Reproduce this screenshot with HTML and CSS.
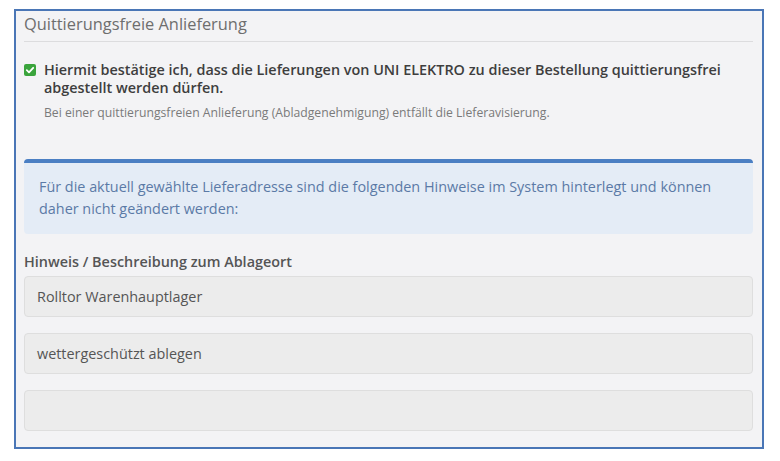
FILE: index.html
```html
<!DOCTYPE html>
<html lang="de">
<head>
    <meta charset="UTF-8">
    <meta name="viewport" content="width=device-width, initial-scale=1.0">
    <title>Quittierungsfreie Anlieferung</title>
    <link rel="stylesheet" href="styles.css">
</head>
<body>

    <div class="panel">
        <h3 class="panel-title">Quittierungsfreie Anlieferung</h3>

        <!-- Bestaetigung -->
        <div class="confirm">
            <span class="check">
                <svg width="12" height="12" viewBox="0 0 12 12">
                    <rect x="0" y="0" width="12" height="12" rx="2" fill="#3aa43c"/>
                    <path d="M2.8 6.2 L5 8.3 L9.2 3.8" stroke="#fff" stroke-width="1.8" fill="none" stroke-linecap="round" stroke-linejoin="round"/>
                </svg>
            </span>
            <div class="confirm-text">
                <p class="confirm-label">Hiermit bestätige ich, dass die Lieferungen von UNI ELEKTRO zu dieser Bestellung quittierungsfrei abgestellt werden dürfen.</p>
                <p class="hint">Bei einer quittierungsfreien Anlieferung (Abladgenehmigung) entfällt die Lieferavisierung.</p>
            </div>
        </div>

        <div class="info-box">
            Für die aktuell gewählte Lieferadresse sind die folgenden Hinweise im System hinterlegt und können daher nicht geändert werden:
        </div>

        <label class="field-label">Hinweis / Beschreibung zum Ablageort</label>
        <div class="field">Rolltor Warenhauptlager</div>
        <div class="field">wettergeschützt ablegen</div>
        <div class="field"></div>
    </div>

</body>
</html>
```

FILE: styles.css
```css
body {
    font-family: "Open Sans", Arial, sans-serif;
    margin: 0;
    background: #ffffff;
}
.panel {
    margin: 9px 0 0 14px;
    width: 750px;
    box-sizing: border-box;
    border: 2px solid #4a76b6;
    background: #f3f3f5;
    padding: 2px 9px 16px 8px;
}
.panel-title {
    margin: 0;
    font-size: 16.4px;
    font-weight: 400;
    line-height: 22px;
    color: #6e6e6e;
    padding-bottom: 6px;
    border-bottom: 1px solid #dcdcde;
}
.confirm {
    display: flex;
    margin-top: 19px;
}
.check {
    width: 12px;
    height: 12px;
    margin-top: 3px;
    margin-right: 8px;
    flex-shrink: 0;
}
.check svg {
    display: block;
}
.confirm-text p {
    margin: 0;
}
.confirm-label {
    font-size: 14.4px;
    font-weight: 600;
    line-height: 18px;
    color: #3e3e3e;
    padding-right: 20px;
}
.hint {
    font-size: 12.2px;
    line-height: 16px;
    color: #7a7a7a;
    margin-top: 8px !important;
}
.info-box {
    margin-top: 38px;
    background: #e4ecf6;
    border-top: 4px solid #4b7fc3;
    border-radius: 4px;
    padding: 13px 30px 14px 15px;
    font-size: 14.4px;
    line-height: 22px;
    color: #5b7aa6;
}
.field-label {
    display: block;
    margin-top: 19px;
    font-size: 14.4px;
    font-weight: 600;
    line-height: 18px;
    color: #555555;
}
.field {
    margin-top: 16px;
    height: 41px;
    box-sizing: border-box;
    background: #ececec;
    border: 1px solid #dedede;
    border-radius: 4px;
    padding: 0 12px;
    font-size: 14.4px;
    line-height: 39px;
    color: #555555;
}
.field-label + .field {
    margin-top: 5px;
}
```
